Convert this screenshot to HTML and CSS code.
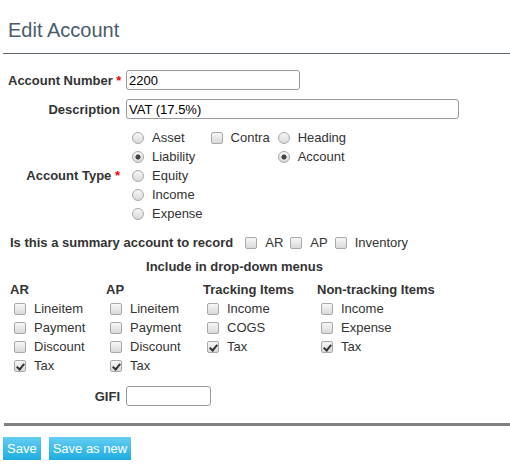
FILE: index.html
```html
<!DOCTYPE html>
<html>
<head>
<meta charset="utf-8">
<title>Edit Account</title>
<link rel="stylesheet" href="styles.css">
</head>
<body>
<h1 class="title">Edit Account</h1>
<hr class="title-rule">
<form class="form">
  <div class="row">
    <label class="label">Account Number <span class="req">*</span></label>
    <input class="text w-num" type="text" value="2200">
  </div>
  <div class="row row-gap">
    <label class="label">Description</label>
    <input class="text w-desc" type="text" value="VAT (17.5%)">
  </div>
  <div class="row row-type">
    <span class="label">Account Type <span class="req">*</span></span>
    <div class="types">
      <label class="opt c1 r1"><input type="radio" name="cat">Asset</label>
      <label class="opt c2 r1"><input type="checkbox">Contra</label>
      <label class="opt c3 r1"><input type="radio" name="kind">Heading</label>
      <label class="opt c1 r2"><input type="radio" name="cat" checked>Liability</label>
      <label class="opt c3 r2"><input type="radio" name="kind" checked>Account</label>
      <label class="opt c1 r3"><input type="radio" name="cat">Equity</label>
      <label class="opt c1 r4"><input type="radio" name="cat">Income</label>
      <label class="opt c1 r5"><input type="radio" name="cat">Expense</label>
    </div>
  </div>
  <div class="summary">
    <span class="bold">Is this a summary account to record</span>
    <label class="opt first"><input type="checkbox">AR</label>
    <label class="opt"><input type="checkbox">AP</label>
    <label class="opt"><input type="checkbox">Inventory</label>
  </div>
  <div class="include bold">Include in drop-down menus</div>
  <div class="menus">
    <div class="col">
      <div class="col-head">AR</div>
      <label class="item"><input type="checkbox">Lineitem</label>
      <label class="item"><input type="checkbox">Payment</label>
      <label class="item"><input type="checkbox">Discount</label>
      <label class="item"><input type="checkbox" checked>Tax</label>
    </div>
    <div class="col">
      <div class="col-head">AP</div>
      <label class="item"><input type="checkbox">Lineitem</label>
      <label class="item"><input type="checkbox">Payment</label>
      <label class="item"><input type="checkbox">Discount</label>
      <label class="item"><input type="checkbox" checked>Tax</label>
    </div>
    <div class="col">
      <div class="col-head">Tracking Items</div>
      <label class="item"><input type="checkbox">Income</label>
      <label class="item"><input type="checkbox">COGS</label>
      <label class="item"><input type="checkbox" checked>Tax</label>
    </div>
    <div class="col">
      <div class="col-head">Non-tracking Items</div>
      <label class="item"><input type="checkbox">Income</label>
      <label class="item"><input type="checkbox">Expense</label>
      <label class="item"><input type="checkbox" checked>Tax</label>
    </div>
  </div>
  <div class="row row-gifi">
    <label class="label">GIFI</label>
    <input class="text w-gifi" type="text" value="">
  </div>
</form>
<hr class="foot-rule">
<div class="actions">
  <button class="btn" type="button">Save</button>
  <button class="btn" type="button">Save as new</button>
</div>
</body>
</html>
```

FILE: styles.css
```css
* { box-sizing: border-box; }

body {
  margin: 0;
  font-family: "Liberation Sans", Arial, sans-serif;
  font-size: 13px;
  color: #333;
  background: #fff;
}

.title {
  margin: 0;
  padding: 19px 0 0 8px;
  font-size: 20px;
  line-height: 23px;
  font-weight: normal;
  color: #4b5b6a;
}

.title-rule {
  margin: 11px 0 0 3px;
  border: 0;
  border-top: 1px solid #5d6870;
  height: 0;
}

.form {
  margin-top: 16px;
  padding-left: 8px;
}

.row {
  display: flex;
  align-items: center;
  gap: 6px;
}

.row-gap { margin-top: 9px; }
.row-type { margin-top: 9px; }
.row-gifi { margin-top: 11px; }

.label {
  width: 112px;
  text-align: right;
  font-weight: bold;
  white-space: nowrap;
}

.req { color: #e00; }

.bold { font-weight: bold; }

.text {
  height: 20px;
  margin: 0;
  padding: 0 2px;
  border: 1px solid #999;
  border-radius: 3px;
  font-family: "Liberation Sans", Arial, sans-serif;
  font-size: 13px;
  color: #000;
  background: #fff;
}

.w-num { width: 174px; }
.w-desc { width: 333px; }
.w-gifi { width: 85px; }

.types {
  display: grid;
  grid-template-columns: auto auto auto;
  grid-template-rows: repeat(5, 19px);
  column-gap: 2px;
}

.c1 { grid-column: 1; }
.c2 { grid-column: 2; }
.c3 { grid-column: 3; }
.r1 { grid-row: 1; }
.r2 { grid-row: 2; }
.r3 { grid-row: 3; }
.r4 { grid-row: 4; }
.r5 { grid-row: 5; }

.opt, .item {
  display: flex;
  align-items: center;
  height: 19px;
  white-space: nowrap;
}

input[type="radio"],
input[type="checkbox"] {
  -webkit-appearance: none;
  appearance: none;
  position: relative;
  width: 12px;
  height: 12px;
  margin: 1px 8px 0 6px;
  border: 1px solid #a9a9a9;
  background: linear-gradient(#f7f7f7, #d9d9d9);
  flex: none;
}

input[type="checkbox"] { border-radius: 2px; }
input[type="radio"] { border-radius: 50%; }

input[type="radio"]:checked {
  background: radial-gradient(circle, #444 0, #444 2.3px, transparent 2.8px), linear-gradient(#f7f7f7, #d9d9d9);
}

input[type="checkbox"]:checked::after {
  content: "";
  position: absolute;
  left: 3px;
  top: 1px;
  width: 3px;
  height: 6px;
  border-right: 2px solid #333;
  border-bottom: 2px solid #333;
  transform: rotate(40deg);
}

.summary {
  display: flex;
  align-items: center;
  height: 19px;
  margin-top: 10px;
  padding-left: 2px;
}

.summary .opt input { margin-left: 7px; margin-right: 8px; }
.summary .opt.first input { margin-left: 12px; }

.include {
  width: 453px;
  text-align: center;
  line-height: 19px;
  margin-top: 5px;
}

.menus {
  display: grid;
  grid-template-columns: 96px 97px 114px auto;
  justify-content: start;
  margin-top: 4px;
  padding-left: 2px;
}

.col {
  display: flex;
  flex-direction: column;
}

.col-head {
  font-weight: bold;
  line-height: 19px;
  white-space: nowrap;
}

.item input { margin-left: 4px; }

.foot-rule {
  margin: 17px 0 0 4px;
  border: 0;
  border-top: 3px solid #808080;
  height: 0;
}

.actions {
  display: flex;
  gap: 8px;
  margin-top: 11px;
  padding-left: 3px;
}

.btn {
  height: 23px;
  margin: 0;
  padding: 0 4px;
  border: 0;
  border-radius: 0;
  background: linear-gradient(#64cdf3, #1eaddf);
  color: #fff;
  font-family: "Liberation Sans", Arial, sans-serif;
  font-size: 13px;
}
```
